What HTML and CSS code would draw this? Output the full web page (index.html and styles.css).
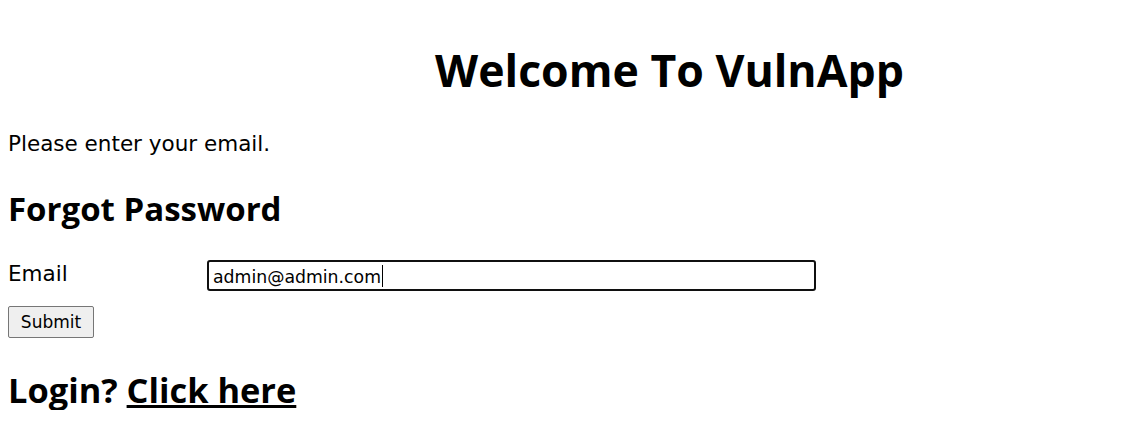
FILE: index.html
```html
<!DOCTYPE html>
<html lang="en">
<head>
<meta charset="utf-8">
<title>VulnApp - Forgot Password</title>
<link rel="stylesheet" href="styles.css">
</head>
<body>
<h1 class="title">Welcome To VulnApp</h1>
<p class="intro">Please enter your email.</p>
<h2 class="heading">Forgot Password</h2>
<form class="form">
  <div class="row">
    <label class="label" for="email">Email</label>
    <span class="field">
      <input class="input" id="email" type="text" value="admin@admin.com">
    </span>
  </div>
  <button class="submit" type="button">Submit</button>
</form>
<h2 class="login">Login? <a class="link" href="#">Click here</a></h2>
</body>
</html>
```

FILE: styles.css
```css
html, body {
  margin: 0;
  background: #fff;
}
body {
  padding: 0 8px;
  font-family: "DejaVu Sans", sans-serif;
  color: #000;
}
.title, .heading, .login {
  font-family: "Open Sans", sans-serif;
  font-weight: 700;
}
.title {
  margin: 42px 0 0 192px;
  font-size: 44.6px;
  line-height: 56px;
  text-align: center;
}
.intro {
  margin: 34px 0 0;
  font-size: 21.5px;
  line-height: 24px;
}
.heading {
  margin: 35px 0 0;
  font-size: 33px;
  line-height: 36px;
}
.form {
  margin: 33px 0 0;
}
.row {
  display: flex;
  align-items: center;
}
.label {
  width: 199px;
  font-size: 21.5px;
  line-height: 24px;
  margin-top: -4px;
}
.field {
  position: relative;
  display: block;
}
.field::after {
  content: "";
  position: absolute;
  left: 175px;
  top: 5px;
  width: 1px;
  height: 22px;
  background: #000;
}
.input {
  display: block;
  box-sizing: border-box;
  width: 609px;
  height: 31px;
  border: 2px solid #101010;
  border-radius: 3px;
  padding: 2px 4px 0;
  font-family: inherit;
  font-size: 17.3px;
  color: #000;
  outline: none;
}
.submit {
  display: block;
  margin-top: 15px;
  box-sizing: border-box;
  width: 86px;
  height: 32px;
  padding: 0;
  font-family: inherit;
  font-size: 17px;
  color: #000;
  background: #efefef;
  border: 1px solid #767676;
  border-radius: 2px;
}
.login {
  margin: 32px 0 0;
  font-size: 34.4px;
  line-height: 40px;
}
.link {
  color: #000;
  text-decoration: underline;
}
```
